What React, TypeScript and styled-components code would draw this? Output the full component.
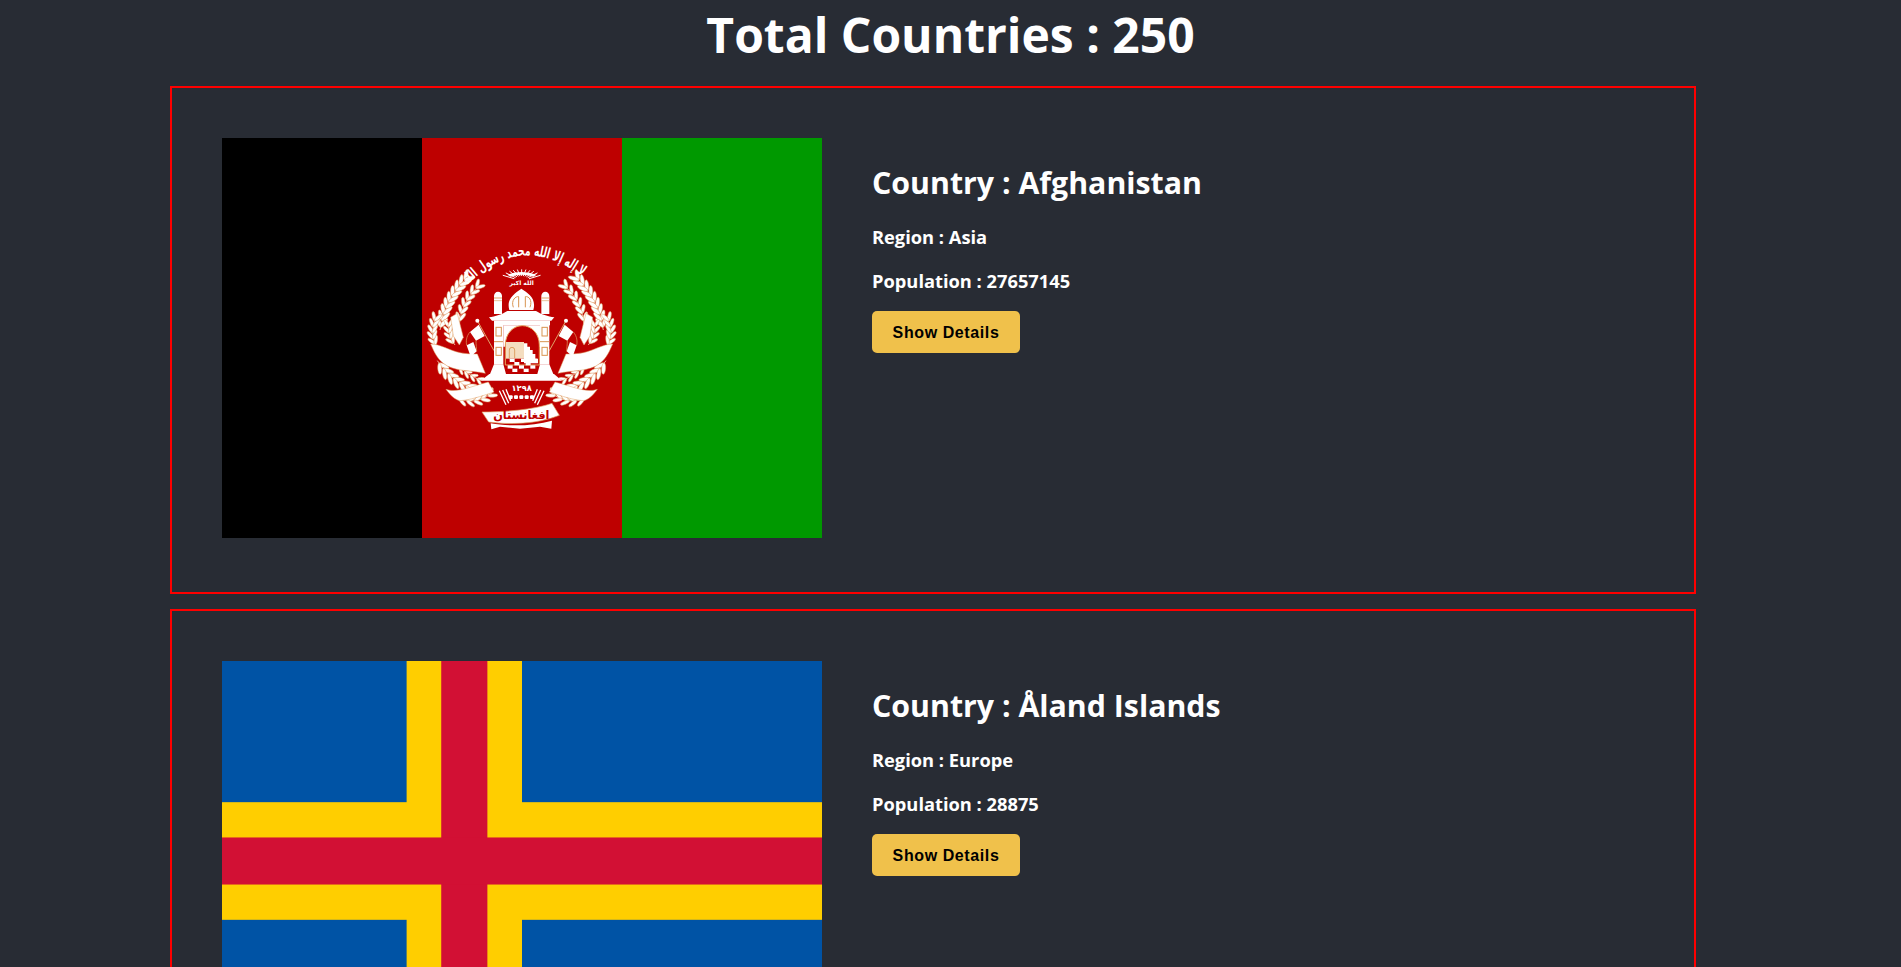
import React from "react";
import styled, { createGlobalStyle } from "styled-components";

const GlobalStyle = createGlobalStyle`
  html, body {
    margin: 0;
    padding: 0;
    overflow: hidden;
    background: #282c34;
  }
`;

type Point = [number, number];

// one wheat ear: grains on both sides of a curved stalk
const WheatEar = ({ from, via, to, grains = 8, size = 15 }: { from: Point; via: Point; to: Point; grains?: number; size?: number }) => {
  const items: React.ReactNode[] = [];
  for (let i = 0; i < grains; i++) {
    const t = (i + 0.5) / grains;
    const x = (1 - t) * (1 - t) * from[0] + 2 * (1 - t) * t * via[0] + t * t * to[0];
    const y = (1 - t) * (1 - t) * from[1] + 2 * (1 - t) * t * via[1] + t * t * to[1];
    const dx = 2 * (1 - t) * (via[0] - from[0]) + 2 * t * (to[0] - via[0]);
    const dy = 2 * (1 - t) * (via[1] - from[1]) + 2 * t * (to[1] - via[1]);
    const angle = (Math.atan2(dy, dx) * 180) / Math.PI;
    [-30, 30].forEach(tilt => {
      const off = ((angle + tilt) * Math.PI) / 180;
      const cx = x + Math.cos(off) * size * 0.75;
      const cy = y + Math.sin(off) * size * 0.75;
      items.push(
        <ellipse
          key={`${i}${tilt}`}
          cx={cx}
          cy={cy}
          rx={size * 0.85}
          ry={size * 0.3}
          transform={`rotate(${angle + tilt} ${cx} ${cy})`}
          fill="#fff"
          stroke="#e0a468"
          strokeWidth="1.5"
        />
      );
    });
  }
  return (
    <g>
      <path d={`M${from[0]} ${from[1]} Q${via[0]} ${via[1]} ${to[0]} ${to[1]}`} fill="none" stroke="#f3d9bd" strokeWidth="2.5" />
      {items}
    </g>
  );
};

const EmblemSide = () => (
  <g>
    <WheatEar from={[60, 300]} via={[74, 210]} to={[142, 142]} grains={9} size={20} />
    <WheatEar from={[118, 282]} via={[124, 215]} to={[178, 165]} grains={6} size={17} />
    <WheatEar from={[50, 350]} via={[28, 310]} to={[48, 262]} grains={5} size={17} />
    <WheatEar from={[105, 345]} via={[84, 320]} to={[86, 280]} grains={4} size={16} />
    <WheatEar from={[52, 392]} via={[92, 456]} to={[172, 482]} grains={7} size={20} />
    <WheatEar from={[112, 408]} via={[140, 432]} to={[182, 452]} grains={4} size={14} />
    <WheatEar from={[108, 502]} via={[165, 530]} to={[216, 490]} grains={5} size={17} />
    <path d="M92 262 L112 250 L130 322 L118 345 L100 318 Z" fill="#fff" stroke="#e0a468" strokeWidth="1.5" />
    <path
      d="M32 342 C60 342 90 362 120 368 C140 372 160 372 172 372 L196 430 C150 420 100 425 70 400 C50 385 40 360 32 342 Z"
      fill="#fff"
      stroke="#e0a468"
      strokeWidth="1.5"
    />
    <path d="M78 478 C110 490 150 470 205 456 L222 486 C180 500 150 510 120 512 C105 510 90 495 78 478 Z" fill="#fff" stroke="#e0a468" strokeWidth="1.5" />
    {/* small flag on its pole */}
    <line x1="172" y1="272" x2="222" y2="362" stroke="#e0a468" strokeWidth="3" />
    <circle cx="172" cy="272" r="6" fill="#fff" />
    <path d="M176 284 L194 318 L168 332 L150 306 Z" fill="#fff" />
    <path d="M140 346 L160 336 L170 364 L152 380 Z" fill="#fff" />
    <path d="M150 306 C138 320 138 335 140 346 M168 332 C168 345 170 355 170 364" fill="none" stroke="#e0a468" strokeWidth="2" />
    {/* minaret */}
    <path d="M222 252 V198 A12 13 0 0 1 246 198 V252 Z" fill="#fff" />
    <line x1="222" y1="204" x2="246" y2="204" stroke="#e0a468" strokeWidth="3" />
    <line x1="222" y1="212" x2="246" y2="212" stroke="#e0a468" strokeWidth="2" />
    {/* column beside the arch */}
    <rect x="222" y="285" width="28" height="118" fill="#fff" />
    <rect x="228" y="292" width="16" height="26" fill="none" stroke="#d89450" strokeWidth="3" />
    <rect x="228" y="352" width="16" height="24" fill="none" stroke="#d89450" strokeWidth="3" />
    <line x1="222" y1="335" x2="250" y2="335" stroke="#d89450" strokeWidth="3" />
    {/* fan by the date */}
    <path d="M238 482 L258 524 M248 480 L266 520 M258 478 L272 512" stroke="#fff" strokeWidth="4" />
  </g>
);

const Emblem = () => (
  <g transform="translate(198 92) scale(0.33333)">
    <EmblemSide />
    <g transform="translate(610 0) scale(-1 1)">
      <EmblemSide />
    </g>

    <defs>
      <path id="shahada-arc" d="M140 168 Q300 0 488 140" />
    </defs>
    <EmblemText $size={44} fill="#fff">
      <textPath href="#shahada-arc" startOffset="50%" textAnchor="middle" textLength="385" lengthAdjust="spacingAndGlyphs">
        لا إله إلا الله محمد رسول الله
      </textPath>
    </EmblemText>

    {/* rays over the mosque */}
    {[-66, -50, -36, -24, -12, 0, 12, 24, 36, 50, 66].map(a => (
      <line
        key={a}
        x1={305 + Math.sin((a * Math.PI) / 180) * 24}
        y1={152 - Math.cos((a * Math.PI) / 180) * 14}
        x2={305 + Math.sin((a * Math.PI) / 180) * 62}
        y2={148 - Math.cos((a * Math.PI) / 180) * 30}
        stroke="#fff"
        strokeWidth="3"
      />
    ))}
    <path d="M262 134 Q305 118 350 134 L340 140 Q305 128 272 140 Z" fill="#fff" />
    <EmblemText x="305" y="166" textAnchor="middle" $size={18} fill="#fff">
      الله اکبر
    </EmblemText>

    {/* dome */}
    <path d="M268 240 C258 205 285 190 304 176 C325 190 350 205 340 240 Z" fill="#fff" />
    <path d="M280 232 C272 210 288 198 296 200 V232 M316 232 V200 C326 198 338 210 330 232" fill="none" stroke="#d89450" strokeWidth="3" />

    {/* roof and beam */}
    <path d="M262 243 H348 C362 252 385 260 403 262 L394 272 H216 L207 262 C225 260 248 252 262 243 Z" fill="#fff" />
    <rect x="222" y="272" width="168" height="14" fill="#fff" />
    <path d="M250 286 H360 V350 H250 Z" fill="#fff" />

    {/* arch with court inside */}
    <path d="M256 405 V345 C256 310 280 287 307 287 C334 287 358 310 358 345 V405 Z" fill="#be0000" stroke="#e8a860" strokeWidth="3" />
    <rect x="258" y="336" width="54" height="50" fill="#f4ddc0" />
    <path d="M268 384 V360 A8 8 0 0 1 284 360 V384" fill="none" stroke="#d89450" strokeWidth="2.5" />
    <path d="M312 340 H322 V350 H330 V360 H338 V372 H346 V386 H354 V400 H312 Z" fill="#fff" />
    {[0, 1, 2, 3].map(row =>
      [0, 1, 2, 3, 4].map(col =>
        (row + col) % 2 === 0 ? <rect key={`${row}-${col}`} x={266 + col * 17 - (row - 1) * 3} y={386 + row * 10} width={15} height={10} fill="#fff" /> : null
      )
    )}

    {/* plinth */}
    <path d="M222 403 H250 L258 432 H210 Z M388 403 H360 L352 432 H400 Z" fill="#fff" />
    <path d="M208 432 H402 L426 452 H182 Z" fill="#fff" />

    <EmblemText x="305" y="484" textAnchor="middle" $size={25} fill="#fff">
      ۱۲۹۸
    </EmblemText>
    {[272, 288, 304, 320, 336].map(x => (
      <rect key={x} x={x - 6} y={496} width={12} height={11} rx={3} fill="#fff" />
    ))}

    {/* name scroll */}
    <path d="M186 546 C250 546 340 540 396 520 L418 556 C350 584 262 584 206 576 Z" fill="#fff" stroke="#e0a468" strokeWidth="2" />
    <path d="M212 580 L214 598 L240 590 L300 596 L360 590 L394 596 L396 572 C340 588 270 590 212 580 Z" fill="#fff" />
    <EmblemText x="304" y="566" textAnchor="middle" $size={34} fill="#be0000">
      افغانستان
    </EmblemText>
  </g>
);

const AfghanistanFlag = () => (
  <FlagImage viewBox="0 0 600 400">
    <rect x="0" width="200" height="400" fill="#000" />
    <rect x="200" width="200" height="400" fill="#be0000" />
    <rect x="400" width="200" height="400" fill="#009900" />
    <Emblem />
  </FlagImage>
);

const AlandFlag = () => (
  <FlagImage viewBox="0 0 26 17" preserveAspectRatio="none">
    <rect width="26" height="17" fill="#0053a5" />
    <rect x="8" width="5" height="17" fill="#ffce00" />
    <rect y="6" width="26" height="5" fill="#ffce00" />
    <rect x="9.5" width="2" height="17" fill="#d21034" />
    <rect y="7.5" width="26" height="2" fill="#d21034" />
  </FlagImage>
);

const countries = [
  { name: "Afghanistan", region: "Asia", population: 27657145, flag: <AfghanistanFlag /> },
  { name: "Åland Islands", region: "Europe", population: 28875, flag: <AlandFlag /> }
];

export default function App() {
  return (
    <SPage>
      <GlobalStyle />
      <STitle>Total Countries : 250</STitle>
      <SList>
        {countries.map(country => (
          <SCard key={country.name}>
            {country.flag}
            <SInfo>
              <SName>Country : {country.name}</SName>
              <SFact>Region : {country.region}</SFact>
              <SFact>Population : {country.population}</SFact>
              <SButton>Show Details</SButton>
            </SInfo>
          </SCard>
        ))}
      </SList>
    </SPage>
  );
}

const SPage = styled.div`
  height: 967px;
  overflow: hidden;
  background: #282c34;
  color: #fff;
  font-family: "Open Sans", "Noto Sans", sans-serif;
`;

const STitle = styled.h1`
  margin: 0;
  height: 72px;
  padding-bottom: 14px;
  font-size: 48px;
  line-height: 70px;
  font-weight: 700;
  text-align: center;
`;

const SList = styled.div`
  display: flex;
  flex-direction: column;
  gap: 15px;
  width: 1526px;
  margin-left: 170px;
`;

const SCard = styled.div`
  display: flex;
  gap: 50px;
  box-sizing: border-box;
  height: 508px;
  padding: 50px;
  border: 2px solid #f00;
`;

const FlagImage = styled.svg`
  display: block;
  flex: none;
  width: 600px;
  height: 400px;
`;

const EmblemText = styled.text<{ $size: number }>`
  font-family: "DejaVu Sans", sans-serif;
  font-weight: 700;
  font-size: ${p => p.$size}px;
`;

const SInfo = styled.div`
  display: flex;
  flex-direction: column;
  align-items: flex-start;
  padding-top: 24px;
`;

const SName = styled.h2`
  margin: 0 0 20px;
  font-size: 30.3px;
  line-height: 42px;
  font-weight: 700;
`;

const SFact = styled.h3`
  margin: 0 0 18px;
  font-size: 18.3px;
  line-height: 26px;
  font-weight: 700;
`;

const SButton = styled.button`
  width: 148px;
  height: 42px;
  margin-top: -1px;
  padding: 2px 0 0;
  border: none;
  border-radius: 5px;
  background: #f0c14b;
  color: #000;
  font-family: "Liberation Sans", Arial, sans-serif;
  font-size: 16px;
  font-weight: 700;
  letter-spacing: 0.6px;
`;
